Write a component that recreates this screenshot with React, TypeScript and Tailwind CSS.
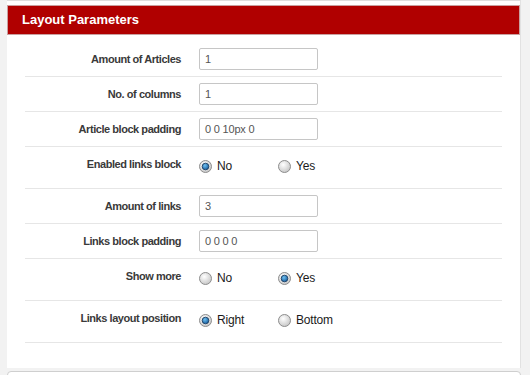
import React from "react";

type Row =
  | { kind: "input"; label: string; value: string }
  | { kind: "radio"; label: string; options: string[]; selected: number };

const rows: Row[] = [
  { kind: "input", label: "Amount of Articles", value: "1" },
  { kind: "input", label: "No. of columns", value: "1" },
  { kind: "input", label: "Article block padding", value: "0 0 10px 0" },
  { kind: "radio", label: "Enabled links block", options: ["No", "Yes"], selected: 0 },
  { kind: "input", label: "Amount of links", value: "3" },
  { kind: "input", label: "Links block padding", value: "0 0 0 0" },
  { kind: "radio", label: "Show more", options: ["No", "Yes"], selected: 1 },
  { kind: "radio", label: "Links layout position", options: ["Right", "Bottom"], selected: 0 },
];

function Radio({ checked }: { checked: boolean }) {
  return (
    <svg width="13" height="13" viewBox="0 0 13 13" className="shrink-0">
      <defs>
        <radialGradient id="rOff" cx="0.4" cy="0.35" r="0.7">
          <stop offset="0" stopColor="#ffffff" />
          <stop offset="1" stopColor="#c4c4c4" />
        </radialGradient>
        <radialGradient id="rDot" cx="0.4" cy="0.35" r="0.7">
          <stop offset="0" stopColor="#6fc0f0" />
          <stop offset="1" stopColor="#12589a" />
        </radialGradient>
      </defs>
      <circle cx="6.5" cy="6.5" r="6" fill="url(#rOff)" stroke="#8d8d8d" strokeWidth="1" />
      {checked && <circle cx="6.5" cy="6.5" r="3.3" fill="url(#rDot)" stroke="#1d3f63" strokeWidth="0.9" />}
    </svg>
  );
}

function FieldRow({ row }: { row: Row }) {
  if (row.kind === "input") {
    return (
      <div className="flex items-center gap-[18px] py-[6px] border-b border-[#e6e6e6]">
        <div className="w-[156px] text-right text-[11px] font-bold text-[#3a3a3a] tracking-[-0.45px] leading-[22px]">
          {row.label}
        </div>
        <div className="w-[119px] h-[22px] border border-[#c6c6c6] rounded-[2px] bg-white px-[5px] flex items-center text-[11px] text-[#555] tracking-[-0.2px]">
          {row.value}
        </div>
      </div>
    );
  }
  return (
    <div className="flex items-start gap-[18px] pt-[6px] pb-[12px] border-b border-[#e6e6e6]">
      <div className="w-[156px] text-right text-[11px] font-bold text-[#3a3a3a] tracking-[-0.45px] leading-[23px]">
        {row.label}
      </div>
      <div className="flex pt-[6px]">
        {row.options.map((o, i) => (
          <div key={o} className="w-[79px] flex items-center gap-[5px] text-[12px] text-[#1a1a1a] tracking-[-0.2px] leading-[14px]">
            <Radio checked={i === row.selected} />
            <span>{o}</span>
          </div>
        ))}
      </div>
    </div>
  );
}

export default function App() {
  return (
    <div className="w-[530px] h-[375px] overflow-hidden bg-[#f2f2f2] pl-[7px] pr-[9px] font-['Liberation_Sans',Arial,sans-serif]">
      <div className="bg-white border-r border-[#e2e2e2] pt-[4px] pb-[25px] border-t border-t-[#dedede]">
        <div className="h-[30px] bg-[#b00000] border border-[#c9a0a0] flex items-center pl-[14px]">
          <span className="text-white font-bold text-[13px]">Layout Parameters</span>
        </div>
        <div className="mx-[18px] pt-[7px]">
          {rows.map((r) => (
            <FieldRow key={r.label} row={r} />
          ))}
        </div>
      </div>
      <div className="mt-[3px] h-[20px] bg-white border border-[#cfcfcf] rounded-t-[4px]" />
    </div>
  );
}
